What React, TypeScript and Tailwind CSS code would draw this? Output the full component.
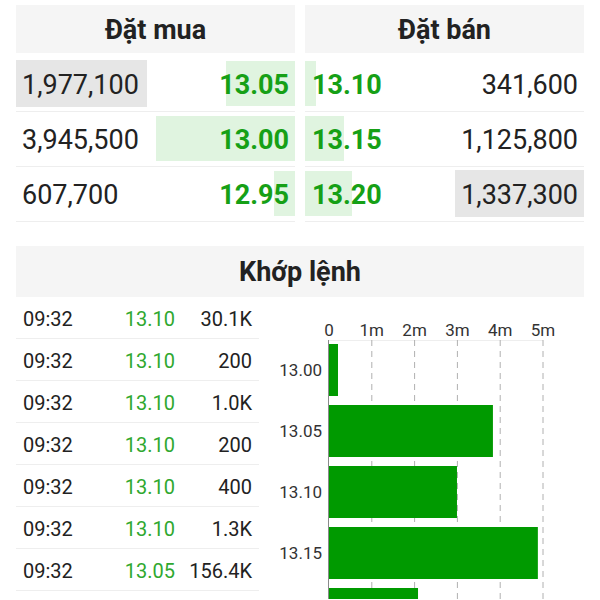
const bids = [
  { vol: "1,977,100", price: "13.05", volBar: 131, priceBar: 69 },
  { vol: "3,945,500", price: "13.00", volBar: 0, priceBar: 139 },
  { vol: "607,700", price: "12.95", volBar: 0, priceBar: 21 },
];

const asks = [
  { price: "13.10", vol: "341,600", priceBar: 11, volBar: 0 },
  { price: "13.15", vol: "1,125,800", priceBar: 39, volBar: 0 },
  { price: "13.20", vol: "1,337,300", priceBar: 47, volBar: 129 },
];

const trades = [
  { time: "09:32", price: "13.10", vol: "30.1K" },
  { time: "09:32", price: "13.10", vol: "200" },
  { time: "09:32", price: "13.10", vol: "1.0K" },
  { time: "09:32", price: "13.10", vol: "200" },
  { time: "09:32", price: "13.10", vol: "400" },
  { time: "09:32", price: "13.10", vol: "1.3K" },
  { time: "09:32", price: "13.05", vol: "156.4K" },
];

const volumeBars = [
  { label: "13.00", value: 0.21 },
  { label: "13.05", value: 3.83 },
  { label: "13.10", value: 2.99 },
  { label: "13.15", value: 4.88 },
  { label: "13.20", value: 2.08 },
];

const X0 = 70;
const UNIT = 42.8;
const CHART_H = 302;

const VolumeChart = () => {
  return (
    <svg width="325" height={CHART_H} className="block">
      <g fontFamily="Roboto, sans-serif" fontSize="17" fill="#333">
        {[0, 1, 2, 3, 4, 5].map((m) => (
          <text key={m} x={X0 + m * UNIT} y="39" textAnchor="middle">
            {m === 0 ? "0" : `${m}m`}
          </text>
        ))}
      </g>
      <line x1={X0} y1="43.5" x2={X0 + 5 * UNIT} y2="43.5" stroke="#eeeeee" strokeWidth="1" />
      {[1, 2, 3, 4, 5].map((m) => (
        <line
          key={m}
          x1={X0 + m * UNIT}
          y1="43"
          x2={X0 + m * UNIT}
          y2={CHART_H}
          stroke="#b0b0b0"
          strokeWidth="1"
          strokeDasharray="6 5"
        />
      ))}
      {volumeBars.map((b, i) => {
        const y = 47 + i * 61;
        return (
          <g key={b.label}>
            <rect x={X0} y={y} width={b.value * UNIT} height="52" fill="#009a00" />
            {/* label sits at the bar's middle; skip the ones below the fold */}
            {y + 32 < CHART_H && (
              <text
                x="63"
                y={y + 32}
                textAnchor="end"
                fontFamily="Roboto, sans-serif"
                fontSize="17"
                fill="#333"
              >
                {b.label}
              </text>
            )}
          </g>
        );
      })}
      <line x1={X0 - 0.5} y1="43" x2={X0 - 0.5} y2={CHART_H} stroke="#8a8a8a" strokeWidth="1" />
    </svg>
  );
};

const App = () => {
  return (
    <div className="w-[600px] h-[600px] overflow-hidden bg-white px-4 pt-[5px] font-['Roboto',sans-serif] text-[#222]">
      <div className="grid grid-cols-2 gap-[10px]">
        <div>
          <div className="h-[48px] pt-[2px] bg-[#f5f5f5] flex items-center justify-center text-[27px] font-bold">
            Đặt mua
          </div>
          <div className="mt-1">
            {bids.map((r) => (
              <div key={r.price} className="relative h-[55px] border-b border-[#eeeeee] flex items-center justify-between px-[6px] pt-[2px] text-[27px]">
                {r.volBar > 0 && (
                  <div className="absolute left-0 top-[3px] bottom-[4px] bg-[#e6e6e6]" style={{ width: r.volBar }} />
                )}
                <div className="absolute right-0 top-[4px] bottom-[5px] bg-[#e0f4e0]" style={{ width: r.priceBar }} />
                <span className="relative">{r.vol}</span>
                <span className="relative font-bold text-[#16a016]">{r.price}</span>
              </div>
            ))}
          </div>
        </div>
        <div>
          <div className="h-[48px] pt-[2px] bg-[#f5f5f5] flex items-center justify-center text-[27px] font-bold">
            Đặt bán
          </div>
          <div className="mt-1">
            {asks.map((r) => (
              <div key={r.price} className="relative h-[55px] border-b border-[#eeeeee] flex items-center justify-between pl-[7px] pr-[6px] pt-[2px] text-[27px]">
                <div className="absolute left-0 top-[4px] bottom-[5px] bg-[#e0f4e0]" style={{ width: r.priceBar }} />
                {r.volBar > 0 && (
                  <div className="absolute right-0 top-[3px] bottom-[4px] bg-[#e6e6e6]" style={{ width: r.volBar }} />
                )}
                <span className="relative font-bold text-[#16a016]">{r.price}</span>
                <span className="relative">{r.vol}</span>
              </div>
            ))}
          </div>
        </div>
      </div>

      <div className="mt-[24px] h-[51px] pt-[2px] bg-[#f5f5f5] flex items-center justify-center text-[27px] font-bold">
        Khớp lệnh
      </div>

      <div className="flex">
        <div className="w-[243px] shrink-0">
          {trades.map((t, idx) => (
            <div key={idx} className="h-[42px] border-b border-[#eeeeee] flex items-center pl-[7px] pr-[7px] pt-[3px] text-[20px]">
              <span className="w-[90px]">{t.time}</span>
              <span className="w-[62px] text-right text-[#2fa82f]">{t.price}</span>
              <span className="flex-1 text-right">{t.vol}</span>
            </div>
          ))}
        </div>
        <div className="flex-1">
          <VolumeChart />
        </div>
      </div>
    </div>
  );
};

export default App;
